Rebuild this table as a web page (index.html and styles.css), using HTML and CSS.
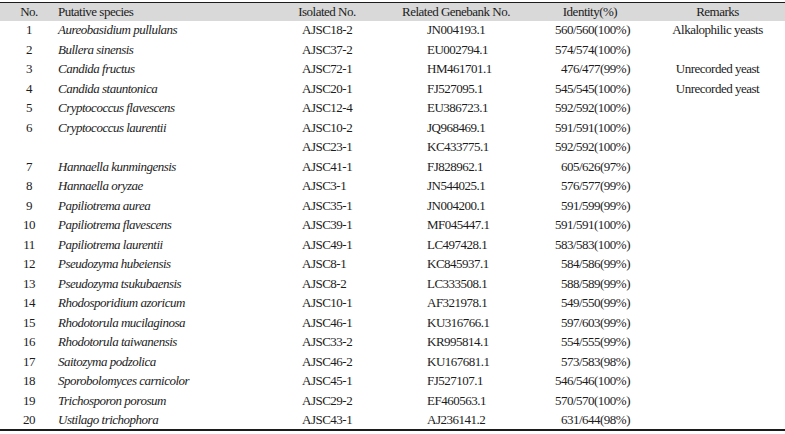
FILE: index.html
```html
<!DOCTYPE html>
<html>
<head>
<meta charset="utf-8">
<link rel="stylesheet" href="styles.css">
</head>
<body>
<table class="tbl">
  <colgroup>
    <col class="c-no"><col class="c-sp"><col class="c-iso"><col class="c-gb"><col class="c-id"><col class="c-rm">
  </colgroup>
  <thead>
    <tr class="head">
      <th class="no">No.</th>
      <th class="sp">Putative species</th>
      <th class="ctr">Isolated No.</th>
      <th class="ctr">Related Genebank No.</th>
      <th class="ctr">Identity(%)</th>
      <th class="ctr">Remarks</th>
    </tr>
  </thead>
  <tbody>
    <tr><td class="no">1</td><td class="sp">Aureobasidium pullulans</td><td class="iso">AJSC18-2</td><td class="gb">JN004193.1</td><td class="id">560/560(100%)</td><td class="rm">Alkalophilic yeasts</td></tr>
    <tr><td class="no">2</td><td class="sp">Bullera sinensis</td><td class="iso">AJSC37-2</td><td class="gb">EU002794.1</td><td class="id">574/574(100%)</td><td class="rm"></td></tr>
    <tr><td class="no">3</td><td class="sp">Candida fructus</td><td class="iso">AJSC72-1</td><td class="gb">HM461701.1</td><td class="id">476/477(99%)</td><td class="rm">Unrecorded yeast</td></tr>
    <tr><td class="no">4</td><td class="sp">Candida stauntonica</td><td class="iso">AJSC20-1</td><td class="gb">FJ527095.1</td><td class="id">545/545(100%)</td><td class="rm">Unrecorded yeast</td></tr>
    <tr><td class="no">5</td><td class="sp">Cryptococcus flavescens</td><td class="iso">AJSC12-4</td><td class="gb">EU386723.1</td><td class="id">592/592(100%)</td><td class="rm"></td></tr>
    <tr><td class="no">6</td><td class="sp">Cryptococcus laurentii</td><td class="iso">AJSC10-2</td><td class="gb">JQ968469.1</td><td class="id">591/591(100%)</td><td class="rm"></td></tr>
    <tr><td class="no"></td><td class="sp"></td><td class="iso">AJSC23-1</td><td class="gb">KC433775.1</td><td class="id">592/592(100%)</td><td class="rm"></td></tr>
    <tr><td class="no">7</td><td class="sp">Hannaella kunmingensis</td><td class="iso">AJSC41-1</td><td class="gb">FJ828962.1</td><td class="id">605/626(97%)</td><td class="rm"></td></tr>
    <tr><td class="no">8</td><td class="sp">Hannaella oryzae</td><td class="iso">AJSC3-1</td><td class="gb">JN544025.1</td><td class="id">576/577(99%)</td><td class="rm"></td></tr>
    <tr><td class="no">9</td><td class="sp">Papiliotrema aurea</td><td class="iso">AJSC35-1</td><td class="gb">JN004200.1</td><td class="id">591/599(99%)</td><td class="rm"></td></tr>
    <tr><td class="no">10</td><td class="sp">Papiliotrema flavescens</td><td class="iso">AJSC39-1</td><td class="gb">MF045447.1</td><td class="id">591/591(100%)</td><td class="rm"></td></tr>
    <tr><td class="no">11</td><td class="sp">Papiliotrema laurentii</td><td class="iso">AJSC49-1</td><td class="gb">LC497428.1</td><td class="id">583/583(100%)</td><td class="rm"></td></tr>
    <tr><td class="no">12</td><td class="sp">Pseudozyma hubeiensis</td><td class="iso">AJSC8-1</td><td class="gb">KC845937.1</td><td class="id">584/586(99%)</td><td class="rm"></td></tr>
    <tr><td class="no">13</td><td class="sp">Pseudozyma tsukubaensis</td><td class="iso">AJSC8-2</td><td class="gb">LC333508.1</td><td class="id">588/589(99%)</td><td class="rm"></td></tr>
    <tr><td class="no">14</td><td class="sp">Rhodosporidium azoricum</td><td class="iso">AJSC10-1</td><td class="gb">AF321978.1</td><td class="id">549/550(99%)</td><td class="rm"></td></tr>
    <tr><td class="no">15</td><td class="sp">Rhodotorula mucilaginosa</td><td class="iso">AJSC46-1</td><td class="gb">KU316766.1</td><td class="id">597/603(99%)</td><td class="rm"></td></tr>
    <tr><td class="no">16</td><td class="sp">Rhodotorula taiwanensis</td><td class="iso">AJSC33-2</td><td class="gb">KR995814.1</td><td class="id">554/555(99%)</td><td class="rm"></td></tr>
    <tr><td class="no">17</td><td class="sp">Saitozyma podzolica</td><td class="iso">AJSC46-2</td><td class="gb">KU167681.1</td><td class="id">573/583(98%)</td><td class="rm"></td></tr>
    <tr><td class="no">18</td><td class="sp">Sporobolomyces carnicolor</td><td class="iso">AJSC45-1</td><td class="gb">FJ527107.1</td><td class="id">546/546(100%)</td><td class="rm"></td></tr>
    <tr><td class="no">19</td><td class="sp">Trichosporon porosum</td><td class="iso">AJSC29-2</td><td class="gb">EF460563.1</td><td class="id">570/570(100%)</td><td class="rm"></td></tr>
    <tr><td class="no">20</td><td class="sp">Ustilago trichophora</td><td class="iso">AJSC43-1</td><td class="gb">AJ236141.2</td><td class="id">631/644(98%)</td><td class="rm"></td></tr>
  </tbody>
</table>
</body>
</html>
```
FILE: styles.css
```css
html, body {
  margin: 0;
  padding: 0;
  background: #ffffff;
}
body {
  font-family: "Liberation Serif", "Times New Roman", serif;
  font-size: 13px;
  letter-spacing: -0.5px;
  color: #1c1c1c;
}
.tbl {
  margin-top: 2px;
  width: 785px;
  table-layout: fixed;
  border-collapse: collapse;
  border-top: 1px solid #1c1c1c;
  border-bottom: 2px solid #1c1c1c;
}
.c-no { width: 58px; }
.c-sp { width: 214px; }
.c-iso { width: 110px; }
.c-gb { width: 148px; }
.c-id { width: 120px; }
.c-rm { width: 135px; }

.tbl th, .tbl td {
  padding: 0;
  white-space: nowrap;
  font-weight: normal;
  vertical-align: middle;
}
.head {
  background: #d9d9d9;
  height: 18px;
}
.tbl tbody tr {
  height: 19.5px;
}
.no { text-align: center; padding-left: 1px; }
.sp { text-align: left; }
td.sp { font-style: italic; }
.ctr { text-align: center; }
.iso { text-align: left; padding-left: 30px !important; }
.gb { text-align: left; padding-left: 45px !important; }
.id { text-align: right; padding-right: 20px !important; }
.rm { text-align: center; }
```
